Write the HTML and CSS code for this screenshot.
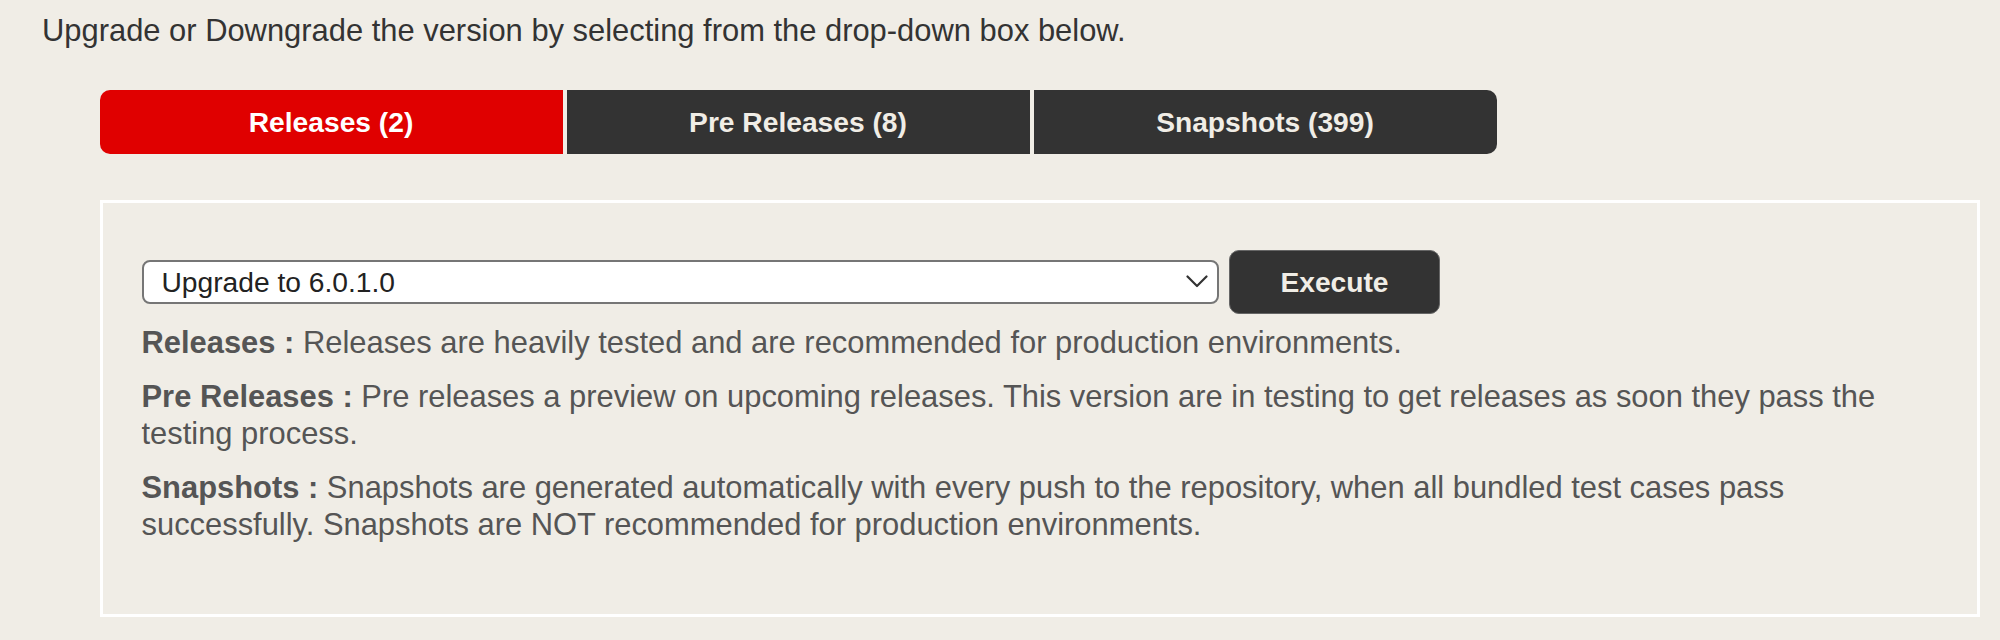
FILE: index.html
```html
<!DOCTYPE html>
<html lang="en">

<head>
    <meta charset="UTF-8">
    <meta name="viewport" content="width=device-width, initial-scale=1.0">
    <title>Version</title>
    <link rel="stylesheet" href="styles.css">
</head>

<body>
    <p class="intro">Upgrade or Downgrade the version by selecting from the drop-down box below.</p>

    <div class="tabs">
        <span class="tab current">Releases (2)</span>
        <span class="tab">Pre Releases (8)</span>
        <span class="tab">Snapshots (399)</span>
    </div>

    <div class="panel">
        <div class="row">
            <div class="select-wrap">
                <select class="version">
                    <option>Upgrade to 6.0.1.0</option>
                </select>
                <svg class="chevron" width="22" height="13" viewBox="0 0 22 13">
                    <path d="M1.5 1.5 L11 11 L20.5 1.5" fill="none" stroke="#333" stroke-width="2.2" stroke-linecap="round" stroke-linejoin="round"/>
                </svg>
            </div>
            <button class="execute">Execute</button>
        </div>

        <div class="desc">
            <p><b>Releases :</b> Releases are heavily tested and are recommended for production environments.</p>
            <p><b>Pre Releases :</b> Pre releases a preview on upcoming releases. This version are in testing to get releases as soon they pass the testing process.</p>
            <p><b>Snapshots :</b> Snapshots are generated automatically with every push to the repository, when all bundled test cases pass successfully. Snapshots are NOT recommended for production environments.</p>
        </div>
    </div>
</body>

</html>
```

FILE: styles.css
```css
body {
    margin: 0;
    padding: 12px 20px 0 42px;
    background-color: #f0ede6;
    font-family: "Liberation Sans", Arial, Helvetica, sans-serif;
    color: #333;
}

.intro {
    margin: 0;
    font-size: 30.9px;
    line-height: 37px;
}

.tabs {
    display: flex;
    gap: 4px;
    margin: 41px 0 0 57.5px;
}

.tab {
    width: 463px;
    height: 64px;
    line-height: 64px;
    text-align: center;
    font-size: 28.2px;
    font-weight: bold;
    color: #f0ede6;
    background-color: #333;
    cursor: pointer;
}

.tab:first-child {
    border-radius: 10px 0 0 10px;
}

.tab:last-child {
    border-radius: 0 10px 10px 0;
}

.current {
    background-color: #e00000;
    color: #fff;
}

.panel {
    margin: 46px 0 0 57.5px;
    border: 3px solid #fff;
    padding: 47px 39px 54px 39px;
}

.row {
    display: flex;
    align-items: center;
    gap: 10px;
}

.select-wrap {
    position: relative;
    width: 1077.5px;
    height: 44px;
}

.version {
    appearance: none;
    -webkit-appearance: none;
    width: 100%;
    height: 100%;
    border: 2px solid #767676;
    border-radius: 8px;
    background-color: #fff;
    padding: 0 40px 0 18px;
    font-family: inherit;
    font-size: 28.2px;
    color: #222;
    outline: none;
}

.chevron {
    position: absolute;
    right: 11px;
    top: 15px;
    pointer-events: none;
}

.execute {
    width: 211px;
    height: 64px;
    border: 1px solid #666;
    border-radius: 10px;
    background-color: #333;
    color: #f0ede6;
    font-family: inherit;
    font-size: 28.2px;
    font-weight: bold;
    cursor: pointer;
}

.desc {
    margin-top: 10px;
    color: #555;
    font-size: 30.9px;
    line-height: 37px;
}

.desc p {
    margin: 0 0 17px;
}
```
